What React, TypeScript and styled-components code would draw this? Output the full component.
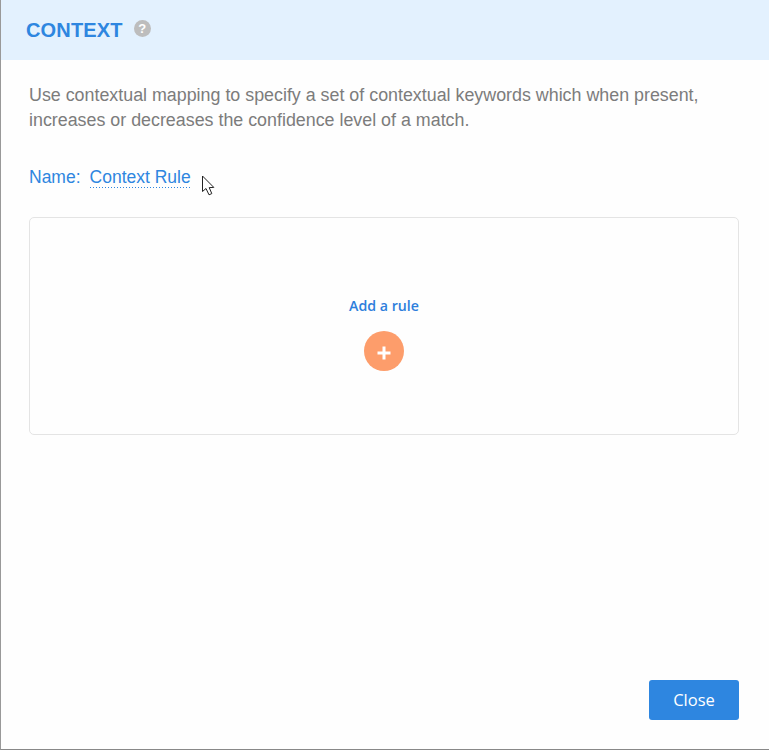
import React from 'react';
import styled, {createGlobalStyle} from "styled-components";

const GlobalStyle = createGlobalStyle`
    html, body {
        margin: 0;
        padding: 0;
        background: #fff;
    }
`;

const App = () => {
    return (
        <>
            <GlobalStyle/>
            <Modal>
                <Header>
                    <Title>CONTEXT</Title>
                    <HelpIcon>?</HelpIcon>
                </Header>
                <Body>
                    <Description>
                        Use contextual mapping to specify a set of contextual keywords which when present,
                        increases or decreases the confidence level of a match.
                    </Description>
                    <NameRow>
                        <NameLabel>Name:</NameLabel>
                        <NameValue>
                            Context Rule
                            <Cursor width="15" height="22" viewBox="0 0 15 22">
                                <path
                                    d="M1.5 1 L1.5 16.5 L5 13.5 L8 19.8 L10.8 18.6 L8.2 12.6 L12.8 12.4 Z"
                                    fill="#fff"
                                    stroke="#222"
                                    strokeWidth="1"
                                />
                            </Cursor>
                        </NameValue>
                    </NameRow>
                    <RulePanel>
                        <AddLabel>Add a rule</AddLabel>
                        <AddButton aria-label="Add a rule">
                            <svg width="14" height="14" viewBox="0 0 14 14">
                                <path d="M7 0.5 V13.5 M0.5 7 H13.5" stroke="#fff" strokeWidth="3"/>
                            </svg>
                        </AddButton>
                    </RulePanel>
                </Body>
                <Footer>
                    <CloseButton>Close</CloseButton>
                </Footer>
            </Modal>
        </>
    );
};

export default App;

const Modal = styled.div`
    box-sizing: border-box;
    width: 769px;
    height: 750px;
    display: flex;
    flex-direction: column;
    background: #fefefe;
    border-left: 1px solid #999;
    border-bottom: 1px solid #888;
    font-family: "Liberation Sans", Arial, sans-serif;
`;

const Header = styled.header`
    height: 60px;
    flex-shrink: 0;
    display: flex;
    align-items: center;
    gap: 11px;
    padding-left: 25px;
    background: #e3f1fe;
`;

const Title = styled.h1`
    margin: 0;
    font-size: 20px;
    font-weight: 700;
    letter-spacing: 0.15px;
    color: #2e86e0;
`;

const HelpIcon = styled.span`
    width: 17px;
    height: 17px;
    border-radius: 50%;
    background: #bdbdbd;
    color: #fff;
    font-size: 13px;
    font-weight: 700;
    line-height: 17px;
    text-align: center;
    margin-bottom: 3px;
`;

const Body = styled.main`
    flex: 1;
    padding: 23px 30px 0 28px;
`;

const Description = styled.p`
    margin: 0;
    font-size: 17.85px;
    line-height: 25px;
    color: #7c7c7c;
`;

const NameRow = styled.div`
    display: flex;
    align-items: flex-start;
    gap: 9px;
    margin-top: 34px;
    font-size: 17.5px;
    line-height: 20px;
    color: #2e86e0;
`;

const NameLabel = styled.span``;

const NameValue = styled.span`
    position: relative;
    padding-bottom: 1px;
    background: linear-gradient(to right, #2e86e0 1.5px, transparent 1.5px) left bottom / 3px 1px repeat-x;
`;

const Cursor = styled.svg`
    position: absolute;
    left: 111px;
    top: 8px;
`;

const RulePanel = styled.section`
    box-sizing: border-box;
    height: 218px;
    margin-top: 29px;
    display: flex;
    flex-direction: column;
    align-items: center;
    padding-top: 78px;
    border: 1px solid #e4e4e4;
    border-radius: 5px;
`;

const AddLabel = styled.div`
    font-family: "Open Sans", sans-serif;
    font-size: 14.2px;
    font-weight: 600;
    line-height: 19px;
    color: #2e7fdc;
`;

const AddButton = styled.button`
    width: 40px;
    height: 40px;
    margin-top: 16px;
    padding: 3px 1px 0 0;
    display: flex;
    align-items: center;
    justify-content: center;
    border: none;
    border-radius: 50%;
    background: #fd9d6b;
`;

const Footer = styled.footer`
    display: flex;
    justify-content: flex-end;
    padding: 0 30px 29px 0;
`;

const CloseButton = styled.button`
    width: 90px;
    height: 40px;
    padding: 0 0 2px;
    border: none;
    border-radius: 3px;
    background: #2e86e0;
    color: #fff;
    font-family: "Open Sans", sans-serif;
    font-size: 16.5px;
`;
